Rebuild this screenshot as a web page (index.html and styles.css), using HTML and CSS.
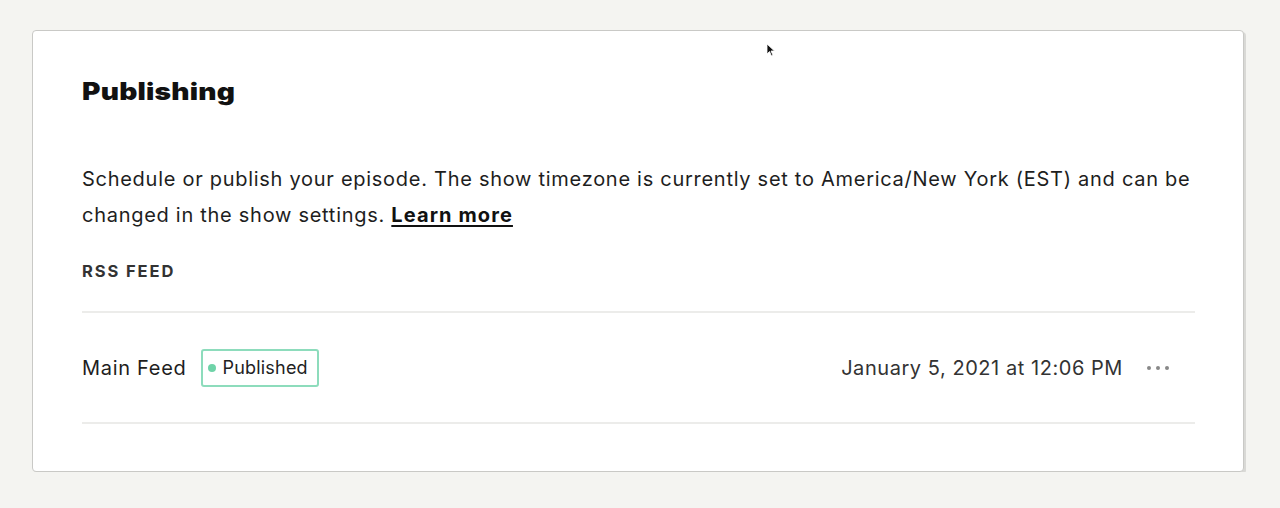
FILE: index.html
```html
<!DOCTYPE html>
<html>
<head>
<meta charset="utf-8">
<link rel="stylesheet" href="styles.css">
</head>
<body>
<div class="page">
  <section class="card">
    <h2 class="title">Publishing</h2>
    <p class="desc">Schedule or publish your episode. The show timezone is currently set to America/New York (EST) and can be changed in the show settings. <a class="link" href="#">Learn more</a></p>
    <h3 class="label">RSS FEED</h3>
    <div class="row">
      <div class="feed">
        <span class="feed-name">Main Feed</span>
        <span class="badge"><span class="dot"></span>Published</span>
      </div>
      <div class="meta">
        <span class="date">January 5, 2021 at 12:06 PM</span>
        <span class="more"><i></i><i></i><i></i></span>
      </div>
    </div>
  </section>
  <svg class="cursor" width="10" height="14" viewBox="0 0 10 14"><path d="M1 1 L1 11 L3.5 8.5 L5.5 13 L7 12.3 L5 8 L8.5 8 Z" fill="#111" stroke="#fff" stroke-width="0.8"/></svg>
</div>
</body>
</html>
```

FILE: styles.css
```css
html, body {
  margin: 0;
  padding: 0;
  background: #f4f4f1;
}
body {
  font-family: Inter, "Liberation Sans", Arial, sans-serif;
  color: #1b1b1b;
  overflow: hidden;
}
.page {
  position: relative;
  padding: 30px 36px 0 32px;
}
.card {
  box-sizing: border-box;
  width: 1212px;
  height: 442px;
  background: #fff;
  border: 1px solid #c9c9c6;
  border-radius: 4px;
  box-shadow: 2px 2px 0 #d9d9d6;
  padding: 46px 48px 0 49px;
}
.title {
  margin: 0;
  width: fit-content;
  font-size: 24px;
  line-height: 30px;
  font-weight: 900;
  letter-spacing: 0.2px;
  color: #111;
  transform: scaleX(1.17);
  transform-origin: left;
}
.desc {
  margin: 54px 0 0 0;
  font-size: 20px;
  line-height: 36px;
  letter-spacing: 0.72px;
  color: #1e1e1e;
}
.link {
  color: #111;
  font-weight: 700;
  letter-spacing: 1.1px;
  text-decoration: underline;
  text-underline-offset: 3px;
  text-decoration-thickness: 2px;
}
.label {
  margin: 28px 0 0 0;
  font-size: 16.5px;
  line-height: 20px;
  font-weight: 700;
  letter-spacing: 1.9px;
  color: #333;
}
.row {
  margin-top: 30px;
  height: 109px;
  border-top: 2px solid #ececea;
  border-bottom: 2px solid #ececea;
  display: flex;
  align-items: center;
  justify-content: space-between;
}
.feed {
  display: flex;
  align-items: center;
  gap: 15px;
}
.feed-name {
  font-size: 20px;
  letter-spacing: 0.7px;
  color: #1e1e1e;
}
.badge {
  display: inline-flex;
  align-items: center;
  box-sizing: border-box;
  height: 38px;
  padding: 0 9px 0 5px;
  border: 2px solid #8ddcbc;
  border-radius: 3px;
  font-size: 18px;
  letter-spacing: 0.2px;
  color: #222;
}
.dot {
  width: 8px;
  height: 8px;
  border-radius: 50%;
  background: #6fd3a8;
  margin-right: 6px;
}
.meta {
  display: flex;
  align-items: center;
  gap: 24px;
  padding-right: 26px;
}
.date {
  font-size: 20px;
  letter-spacing: 0.55px;
  color: #333;
}
.more {
  display: flex;
  gap: 5px;
}
.more i {
  width: 4px;
  height: 4px;
  border-radius: 50%;
  background: #888;
}
.cursor {
  position: absolute;
  left: 766px;
  top: 43px;
}
```
